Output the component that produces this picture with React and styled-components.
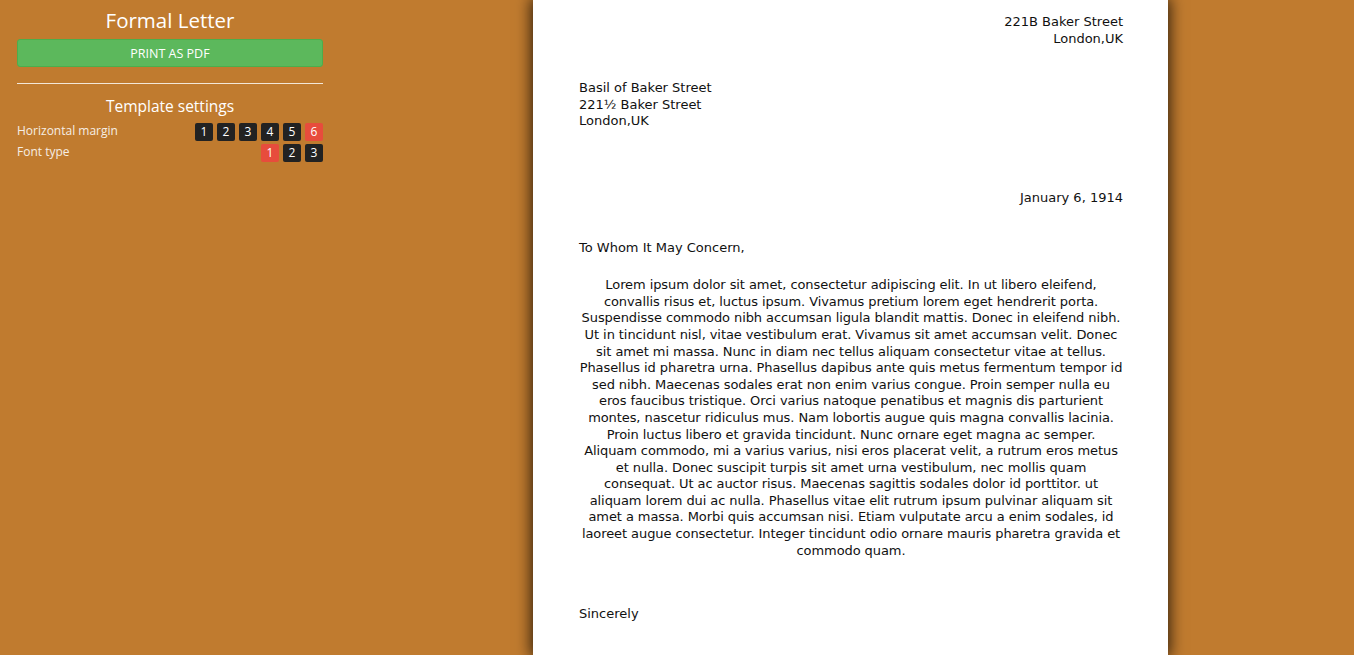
import React from "react";
import styled, { createGlobalStyle } from "styled-components";

const Global = createGlobalStyle`
  html, body { margin: 0; padding: 0; height: 100%; }
  body { background: #c07b2f; overflow: hidden; }
  #root { height: 100%; }
`;

const Page = styled.div`
  display: flex;
  height: 655px;
  overflow: hidden;
`;

const Sidebar = styled.aside`
  width: 306px;
  flex: none;
  padding: 8px 17px 0;
  font-family: "Open Sans", sans-serif;
  color: #fff;
`;

const Title = styled.h1`
  margin: 0 0 7px;
  font-size: 20.5px;
  font-weight: 400;
  text-align: center;
  line-height: 24px;
`;

const PrintButton = styled.button`
  display: block;
  width: 100%;
  height: 28px;
  background: #5cb85c;
  border: 1px solid #4cae4c;
  border-radius: 3px;
  color: #fff;
  font-family: "Open Sans", sans-serif;
  font-size: 12.5px;
  text-transform: uppercase;
  cursor: pointer;
  padding: 0;
`;

const Rule = styled.hr`
  border: 0;
  border-top: 1px solid #f3e7d8;
  margin: 16px 0 12px;
`;

const SubTitle = styled.h2`
  margin: 0 0 7px;
  font-size: 15.5px;
  font-weight: 400;
  text-align: center;
  line-height: 20px;
`;

const SettingRow = styled.div`
  display: flex;
  justify-content: space-between;
  align-items: center;
  margin-bottom: 3px;
`;

const Label = styled.span`
  font-size: 12px;
  line-height: 14px;
  margin-top: -3px;
  color: #f6eee4;
`;

const Options = styled.div`
  display: flex;
  gap: 4px;
`;

const Option = styled.span`
  width: 18px;
  height: 18px;
  border-radius: 2px;
  background: ${(p) => (p.$active ? "#e74c3c" : "#222")};
  color: #fff;
  font-size: 12px;
  line-height: 18px;
  text-align: center;
`;

const Main = styled.main`
  flex: 1;
  display: flex;
  padding-left: 193px;
`;

const Paper = styled.div`
  width: 635px;
  flex: none;
  background: #fff;
  box-shadow: 0 0 14px 2px rgba(0, 0, 0, 0.75);
  padding: 14px 45px 0 46px;
  box-sizing: border-box;
  font-family: "DejaVu Sans", Verdana, sans-serif;
  font-size: 13px;
  line-height: 16.6px;
  color: #111;
`;

const Block = styled.div`
  text-align: ${(p) => p.$align || "left"};
  margin-top: ${(p) => p.$mt || 0}px;
`;

const Body = styled.p`
  margin: 21px 0 0;
  text-align: center;
  letter-spacing: -0.08px;
`;

const Settings = ({ label, count, active }) => (
  <SettingRow>
    <Label>{label}</Label>
    <Options>
      {Array.from({ length: count }, (_, i) => (
        <Option key={i} $active={i + 1 === active}>{i + 1}</Option>
      ))}
    </Options>
  </SettingRow>
);

export default function App() {
  return (
    <Page>
      <Global />
      <Sidebar>
        <Title>Formal Letter</Title>
        <PrintButton>Print as PDF</PrintButton>
        <Rule />
        <SubTitle>Template settings</SubTitle>
        <Settings label="Horizontal margin" count={6} active={6} />
        <Settings label="Font type" count={3} active={1} />
      </Sidebar>
      <Main>
        <Paper>
          <Block $align="right">
            221B Baker Street<br />London,UK
          </Block>
          <Block $mt={33}>
            Basil of Baker Street<br />221½ Baker Street<br />London,UK
          </Block>
          <Block $align="right" $mt={60}>January 6, 1914</Block>
          <Block $mt={33}>To Whom It May Concern,</Block>
          <Body>
            Lorem ipsum dolor sit amet, consectetur adipiscing elit. In ut libero eleifend, convallis risus et, luctus ipsum. Vivamus pretium lorem eget hendrerit porta. Suspendisse commodo nibh accumsan ligula blandit mattis. Donec in eleifend nibh. Ut in tincidunt nisl, vitae vestibulum erat. Vivamus sit amet accumsan velit. Donec sit amet mi massa. Nunc in diam nec tellus aliquam consectetur vitae at tellus. Phasellus id pharetra urna. Phasellus dapibus ante quis metus fermentum tempor id sed nibh. Maecenas sodales erat non enim varius congue. Proin semper nulla eu eros faucibus tristique. Orci varius natoque penatibus et magnis dis parturient montes, nascetur ridiculus mus. Nam lobortis augue quis magna convallis lacinia. Proin luctus libero et gravida tincidunt. Nunc ornare eget magna ac semper. Aliquam commodo, mi a varius varius, nisi eros placerat velit, a rutrum eros metus et nulla. Donec suscipit turpis sit amet urna vestibulum, nec mollis quam consequat. Ut ac auctor risus. Maecenas sagittis sodales dolor id porttitor. ut aliquam lorem dui ac nulla. Phasellus vitae elit rutrum ipsum pulvinar aliquam sit amet a massa. Morbi quis accumsan nisi. Etiam vulputate arcu a enim sodales, id laoreet augue consectetur. Integer tincidunt odio ornare mauris pharetra gravida et commodo quam.
          </Body>
          <Block $mt={47}>Sincerely</Block>
        </Paper>
      </Main>
    </Page>
  );
}
